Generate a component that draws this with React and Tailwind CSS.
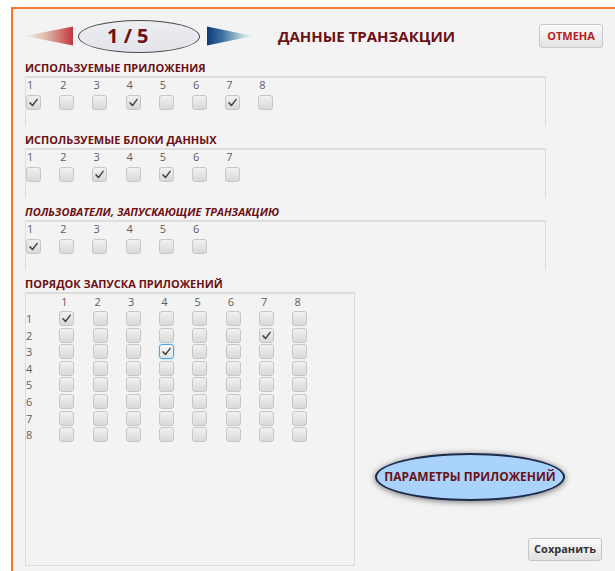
import React from "react";

const FONT = "font-['Open_Sans','Liberation_Sans',sans-serif]";

function Check() {
  return (
    <svg width="11" height="11" viewBox="0 0 12 12" className="block">
      <path d="M2.2 6.4 L4.9 9.2 L10 2.6" fill="none" stroke="#454545" strokeWidth="1.6" strokeLinecap="round" strokeLinejoin="round" />
    </svg>
  );
}

function Box({ checked, focused }) {
  return (
    <div
      className={
        focused
          ? "w-[15px] h-[15px] rounded-[3px] border-[1.5px] border-[#4aa6dc] shadow-[0_0_2px_#8fd2f7] bg-linear-to-b from-[#f7f7f7] to-[#e2e2e2] flex items-center justify-center"
          : "w-[15px] h-[15px] rounded-[3px] border border-[#c6c6c6] bg-linear-to-b from-[#f1f1f1] to-[#d9d9d9] flex items-center justify-center"
      }
    >
      {checked && <Check />}
    </div>
  );
}

function Section({ title, italic, count, checked }) {
  return (
    <div className="flex flex-col">
      <div
        className={
          italic
            ? "h-[14px] leading-[14px] text-[11px] font-bold italic text-[#6b1014]"
            : "h-[14px] leading-[14px] text-[11px] font-bold text-[#6b1014]"
        }
      >
        {title}
      </div>
      <div className="mt-[1px] h-[50px] w-[521px] border-t-2 border-x border-[#dedede] flex">
        {Array.from({ length: count }, (_, i) => (
          <div key={i} className="w-[33.2px] flex flex-col">
            <div className="h-[13px] leading-[13px] text-[11px] text-[#5e5e5e] pl-[1px]">{i + 1}</div>
            <div className="mt-[4px]">
              <Box checked={checked.includes(i + 1)} />
            </div>
          </div>
        ))}
      </div>
    </div>
  );
}

// checked cells of the launch order matrix: [row, column]
const ORDER = [
  [1, 1],
  [2, 7],
  [3, 4],
];

function OrderGrid() {
  const cols = [1, 2, 3, 4, 5, 6, 7, 8];
  return (
    <div className="mt-[1px] h-[274px] w-[330px] border-t-2 border-x border-b border-[#dcdcdc] flex flex-col">
      <div className="mt-[1px] h-[14px] flex">
        <div className="w-[33.3px]" />
        {cols.map((c) => (
          <div key={c} className="w-[33.3px] pl-[2px] leading-[14px] text-[11px] text-[#5e5e5e]">
            {c}
          </div>
        ))}
      </div>
      <div className="mt-[2px] flex flex-col">
        {cols.map((r) => (
          <div key={r} className="h-[16.6px] flex">
            <div className="w-[33.3px] h-[15px] leading-[15px] text-[11px] text-[#5e5e5e]">{r}</div>
            {cols.map((c) => {
              const on = ORDER.some(([rr, cc]) => rr === r && cc === c);
              return (
                <div key={c} className="w-[33.3px]">
                  <Box checked={on} focused={r === 3 && c === 4} />
                </div>
              );
            })}
          </div>
        ))}
      </div>
    </div>
  );
}

export default function App() {
  return (
    <div className={`w-[615px] h-[571px] bg-white pt-[7px] pl-[11px] flex ${FONT}`}>
      <div className="flex-1 border-t-2 border-l-2 border-[#ef7a30] bg-[#f3f3f3] flex flex-col">
        {/* header */}
        <div className="mt-[10px] h-[34px] flex items-center pl-[12px]">
          <svg width="48" height="20" viewBox="0 0 48 20" className="block">
            <defs>
              <linearGradient id="prevGrad" x1="0" x2="1" y1="0" y2="0">
                <stop offset="0" stopColor="#eef3e6" />
                <stop offset="0.45" stopColor="#dcb7a8" />
                <stop offset="1" stopColor="#c3383d" />
              </linearGradient>
            </defs>
            <polygon points="0,10 48,0.5 48,19.5" fill="url(#prevGrad)" />
          </svg>
          <div className="ml-[5px] w-[122px] h-[33px] rounded-[50%] border border-[#4d4d4d] bg-linear-to-b from-[#eceef2] to-[#e2e4ea] flex items-center pl-[28px]">
            <span className="text-[20px] font-bold text-[#6b1014] leading-none">1 / 5</span>
          </div>
          <svg width="46" height="20" viewBox="0 0 46 20" className="block ml-[7px]">
            <defs>
              <linearGradient id="nextGrad" x1="0" x2="1" y1="0" y2="0">
                <stop offset="0" stopColor="#0b3a78" />
                <stop offset="0.35" stopColor="#3f74a8" />
                <stop offset="0.75" stopColor="#b6d4d6" />
                <stop offset="1" stopColor="#eef5e8" />
              </linearGradient>
            </defs>
            <polygon points="0,0.5 46,10 0,19.5" fill="url(#nextGrad)" />
          </svg>
          <div className="ml-[25px] text-[15px] font-bold text-[#6b1014]">ДАННЫЕ ТРАНЗАКЦИИ</div>
          <button className="ml-auto mr-[12px] w-[64px] h-[24px] rounded-[3px] border border-[#c9c9c9] bg-linear-to-b from-[#fbfbfb] to-[#e3e3e3] text-[11px] font-bold text-[#b51d22]">
            ОТМЕНА
          </button>
        </div>

        <div className="mt-[8px] pl-[12px] flex flex-col">
          <Section title="ИСПОЛЬЗУЕМЫЕ ПРИЛОЖЕНИЯ" count={8} checked={[1, 4, 7]} />
          <div className="mt-[7px]">
            <Section title="ИСПОЛЬЗУЕМЫЕ БЛОКИ ДАННЫХ" count={7} checked={[3, 5]} />
          </div>
          <div className="mt-[7px]">
            <Section title="ПОЛЬЗОВАТЕЛИ, ЗАПУСКАЮЩИЕ ТРАНЗАКЦИЮ" italic count={6} checked={[1]} />
          </div>

          <div className="mt-[7px] flex">
            <div className="flex flex-col">
              <div className="h-[14px] leading-[14px] text-[11px] font-bold text-[#6b1014]">
                ПОРЯДОК ЗАПУСКА ПРИЛОЖЕНИЙ
              </div>
              <OrderGrid />
            </div>
            <div className="flex-1 flex flex-col">
              <button className="mt-[176px] ml-[20px] w-[190px] h-[48px] rounded-[50%] border-2 border-[#1d2b4c] bg-[#a9d3fa] shadow-[0_1px_6px_rgba(0,0,0,0.55)] text-[12px] font-bold text-[#6b1014]">
                ПАРАМЕТРЫ ПРИЛОЖЕНИЙ
              </button>
              <button className="mt-[37px] self-end mr-[13px] w-[74px] h-[23px] rounded-[3px] border border-[#c6c6c6] bg-linear-to-b from-[#fbfbfb] to-[#e1e1e1] text-[11px] font-bold text-[#333]">
                Сохранить
              </button>
            </div>
          </div>
        </div>
      </div>
    </div>
  );
}
